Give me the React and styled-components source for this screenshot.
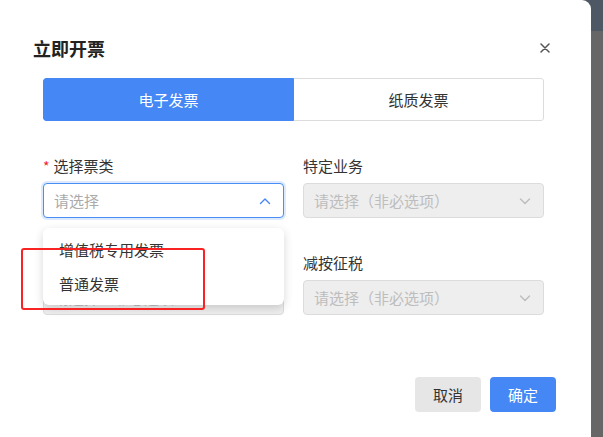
import React from 'react';
import styled, { createGlobalStyle } from 'styled-components';

const GlobalStyle = createGlobalStyle`
  html, body {
    margin: 0;
    padding: 0;
  }
  body {
    font-family: "Noto Sans CJK SC", "Noto Sans", sans-serif;
    color: #333;
  }
`;

const Page = styled.div`
  display: flex;
  width: 603px;
  height: 437px;
  overflow: hidden;
  background: linear-gradient(#4e5764 0 31px, #666666 31px);
`;

const Modal = styled.div`
  position: relative;
  display: flex;
  flex-direction: column;
  width: 591px;
  height: 437px;
  background: #fff;
  border-top-right-radius: 9px;
  box-sizing: border-box;
`;

const Header = styled.div`
  display: flex;
  align-items: center;
  justify-content: space-between;
  height: 24px;
  margin-top: 36px;
  padding: 0 41px 0 33px;
`;

const Title = styled.h2`
  margin: 0;
  font-size: 18px;
  font-weight: 700;
  line-height: 24px;
  color: #222;
`;

const CloseButton = styled.button`
  display: flex;
  align-items: center;
  justify-content: center;
  width: 10px;
  height: 10px;
  padding: 0;
  border: none;
  background: none;
  cursor: pointer;
`;

const Body = styled.div`
  padding: 18px 47px 0 43px;
`;

const Tabs = styled.div`
  display: grid;
  grid-template-columns: 251px 1fr;
  height: 43px;
  border-radius: 3px;
  overflow: hidden;
  box-sizing: border-box;
`;

const Tab = styled.div`
  display: flex;
  align-items: center;
  justify-content: center;
  font-size: 15px;
  color: ${({ active }) => (active ? '#fff' : '#333')};
  background: ${({ active }) => (active ? '#4487f5' : '#fff')};
  border: 1px solid ${({ active }) => (active ? '#4487f5' : '#dcdcdc')};
  border-left: ${({ active }) => (active ? '1px solid #4487f5' : 'none')};
  border-radius: ${({ active }) => (active ? '3px 0 0 3px' : '0 3px 3px 0')};
`;

const Form = styled.div`
  display: grid;
  grid-template-columns: 241px 241px;
  column-gap: 19px;
  row-gap: 35px;
  margin-top: 35px;
`;

const Field = styled.div`
  position: relative;
  display: flex;
  flex-direction: column;
  gap: 7px;
`;

const Label = styled.label`
  height: 20px;
  font-size: 15px;
  line-height: 20px;
  color: #333;
`;

const Required = styled.span`
  color: #f5222d;
  margin-right: 4px;
  font-size: 14px;
`;

const Select = styled.div`
  display: flex;
  align-items: center;
  justify-content: space-between;
  height: 35px;
  padding: 0 12px 0 10px;
  box-sizing: border-box;
  border-radius: 4px;
  border: 1px solid ${({ focused }) => (focused ? '#4a8ef5' : '#dcdcdc')};
  background: ${({ disabled }) => (disabled ? '#eeeeee' : '#fff')};
  box-shadow: ${({ focused }) => (focused ? '0 0 0 2px rgba(68, 135, 245, 0.18)' : 'none')};
`;

const Placeholder = styled.span`
  font-size: 15px;
  color: ${({ disabled }) => (disabled ? '#bdbdbd' : '#aaa')};
`;

const Dropdown = styled.ul`
  position: absolute;
  top: 72px;
  left: 0;
  width: 241px;
  margin: 0;
  padding: 5px 0 4px;
  list-style: none;
  background: #fff;
  border-radius: 6px;
  box-shadow: 0 3px 10px rgba(0, 0, 0, 0.16);
  box-sizing: border-box;
  z-index: 2;
`;

const Option = styled.li`
  height: 34px;
  line-height: 34px;
  padding-left: 16px;
  font-size: 15px;
  color: #333;
`;

const Footer = styled.div`
  display: flex;
  justify-content: flex-end;
  gap: 9px;
  margin-top: 62px;
  padding-right: 35px;
`;

const Button = styled.button`
  width: 66px;
  height: 35px;
  border: none;
  border-radius: 4px;
  font-family: inherit;
  font-size: 15px;
  color: ${({ primary }) => (primary ? '#fff' : '#333')};
  background: ${({ primary }) => (primary ? '#4487f5' : '#e6e6e6')};
  cursor: pointer;
`;

const Annotation = styled.div`
  position: absolute;
  left: 21px;
  top: 248px;
  width: 184px;
  height: 62px;
  border: 2.5px solid #fa2323;
  border-radius: 3px;
  box-sizing: border-box;
  z-index: 3;
  pointer-events: none;
`;

const Chevron = ({ up, color }) => (
  <svg width="12" height="8" viewBox="0 0 12 8">
    <polyline
      points={up ? '1.5,6.5 6,2 10.5,6.5' : '1.5,2 6,6.5 10.5,2'}
      fill="none"
      stroke={color}
      strokeWidth="1.4"
      strokeLinecap="round"
      strokeLinejoin="round"
    />
  </svg>
);

const CloseIcon = () => (
  <svg width="10" height="10" viewBox="0 0 10 10">
    <path d="M1 1 L9 9 M9 1 L1 9" stroke="#555" strokeWidth="1.5" strokeLinecap="round" />
  </svg>
);

const OPTIONAL = '请选择（非必选项）';

const App = () => (
  <>
    <GlobalStyle />
    <Page>
      <Modal>
        <Header>
          <Title>立即开票</Title>
          <CloseButton aria-label="关闭">
            <CloseIcon />
          </CloseButton>
        </Header>
        <Body>
          <Tabs>
            <Tab active>电子发票</Tab>
            <Tab>纸质发票</Tab>
          </Tabs>
          <Form>
            <Field>
              <Label>
                <Required>*</Required>
                选择票类
              </Label>
              <Select focused>
                <Placeholder>请选择</Placeholder>
                <Chevron up color="#4487f5" />
              </Select>
              <Dropdown>
                <Option>增值税专用发票</Option>
                <Option>普通发票</Option>
              </Dropdown>
            </Field>
            <Field>
              <Label>特定业务</Label>
              <Select disabled>
                <Placeholder disabled>{OPTIONAL}</Placeholder>
                <Chevron color="#bdbdbd" />
              </Select>
            </Field>
            <Field>
              <Label />
              <Select disabled>
                <Placeholder disabled>{OPTIONAL}</Placeholder>
                <Chevron color="#bdbdbd" />
              </Select>
            </Field>
            <Field>
              <Label>减按征税</Label>
              <Select disabled>
                <Placeholder disabled>{OPTIONAL}</Placeholder>
                <Chevron color="#bdbdbd" />
              </Select>
            </Field>
          </Form>
        </Body>
        <Footer>
          <Button>取消</Button>
          <Button primary>确定</Button>
        </Footer>
        <Annotation />
      </Modal>
    </Page>
  </>
);

export default App;
